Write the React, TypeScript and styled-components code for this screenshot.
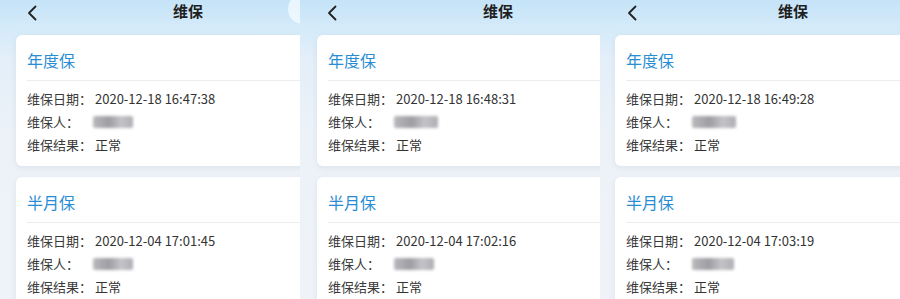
import React from "react";
import styled, { createGlobalStyle } from "styled-components";

const GlobalStyle = createGlobalStyle`
  html, body {
    margin: 0;
    padding: 0;
    background: #eef3f8;
  }
  body {
    font-family: "Noto Sans CJK SC", "Noto Sans", sans-serif;
  }
`;

const PageBox = styled.div`
  display: flex;
  width: 900px;
  height: 299px;
  overflow: hidden;
`;

const ScreenBox = styled.div`
  position: relative;
  flex: none;
  width: 300px;
  height: 299px;
  overflow: hidden;
  background: linear-gradient(
    180deg,
    #c5e3f8 0px,
    #d3eaf9 26px,
    #e4eff9 60px,
    #edf2f8 140px,
    #eff3f8 100%
  );
`;

const HeaderBox = styled.div<{ $titleGap: number }>`
  display: flex;
  align-items: center;
  height: 24px;
  padding-left: 27px;
  gap: ${(p) => p.$titleGap}px;
`;

const BackIcon = styled.svg`
  width: 10px;
  height: 16px;
  margin-top: 2px;
`;

const HeaderTitle = styled.div`
  font-size: 15px;
  font-weight: 700;
  color: #1f1f1f;
  line-height: 20px;
  margin-top: -2px;
`;

const Bubble = styled.div`
  position: absolute;
  top: -6px;
  right: -16px;
  width: 28px;
  height: 30px;
  border-radius: 50%;
  background: rgba(240, 248, 255, 0.85);
`;

const CardList = styled.div<{ $left: number }>`
  display: flex;
  flex-direction: column;
  gap: 11px;
  margin-top: 11px;
  margin-left: ${(p) => p.$left}px;
  width: 320px;
`;

const CardBox = styled.div`
  background: #fff;
  border-radius: 6px;
  box-shadow: 0 2px 6px rgba(120, 140, 170, 0.14);
  padding: 0 0 10px 11px;
`;

const CardTitle = styled.div`
  height: 46px;
  box-sizing: border-box;
  padding-top: 15px;
  font-size: 16px;
  line-height: 20px;
  color: #2a8dd3;
  border-bottom: 1px solid #ececee;
`;

const RowsBox = styled.div`
  padding-top: 6px;
`;

const Row = styled.div`
  display: flex;
  align-items: center;
  height: 23px;
  font-size: 13px;
  color: #333;
`;

const Label = styled.span`
  width: 68px;
  flex: none;
  color: #3a3a3a;
`;

const Blurred = styled.span<{ $w: number }>`
  display: inline-block;
  width: ${(p) => p.$w}px;
  height: 12px;
  margin-left: -2px;
  border-radius: 2px;
  background: linear-gradient(90deg, #b9b9bd, #9d9da2 40%, #c4c4c8 70%, #aeaeb3);
  filter: blur(1.6px);
`;

type Record = { kind: string; date: string; nameW: number };

type Screen = { titleGap: number; cardLeft: number; bubble?: boolean; records: Record[] };

const screens: Screen[] = [
  {
    titleGap: 136,
    cardLeft: 16,
    bubble: true,
    records: [
      { kind: "年度保", date: "2020-12-18 16:47:38", nameW: 40 },
      { kind: "半月保", date: "2020-12-04 17:01:45", nameW: 40 },
    ],
  },
  {
    titleGap: 146,
    cardLeft: 17,
    records: [
      { kind: "年度保", date: "2020-12-18 16:48:31", nameW: 44 },
      { kind: "半月保", date: "2020-12-04 17:02:16", nameW: 40 },
    ],
  },
  {
    titleGap: 141,
    cardLeft: 15,
    records: [
      { kind: "年度保", date: "2020-12-18 16:49:28", nameW: 44 },
      { kind: "半月保", date: "2020-12-04 17:03:19", nameW: 42 },
    ],
  },
];

const RecordCard = ({ record }: { record: Record }) => (
  <CardBox>
    <CardTitle>{record.kind}</CardTitle>
    <RowsBox>
      <Row>
        <Label>维保日期：</Label>
        <span>{record.date}</span>
      </Row>
      <Row>
        <Label>维保人：</Label>
        <Blurred $w={record.nameW} />
      </Row>
      <Row>
        <Label>维保结果：</Label>
        <span>正常</span>
      </Row>
    </RowsBox>
  </CardBox>
);

export default function App() {
  return (
    <>
      <GlobalStyle />
      <PageBox>
        {screens.map((s, i) => (
          <ScreenBox key={i}>
            <HeaderBox $titleGap={s.titleGap}>
              <BackIcon viewBox="0 0 10 16">
                <polyline
                  points="8.5,1.5 2,8 8.5,14.5"
                  fill="none"
                  stroke="#222"
                  strokeWidth="1.8"
                  strokeLinecap="round"
                  strokeLinejoin="round"
                />
              </BackIcon>
              <HeaderTitle>维保</HeaderTitle>
            </HeaderBox>
            {s.bubble && <Bubble />}
            <CardList $left={s.cardLeft}>
              {s.records.map((r) => (
                <RecordCard key={r.kind} record={r} />
              ))}
            </CardList>
          </ScreenBox>
        ))}
      </PageBox>
    </>
  );
}
